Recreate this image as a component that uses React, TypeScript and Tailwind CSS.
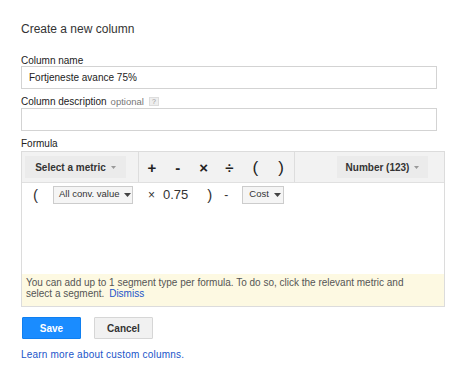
import React from "react";

const Caret = ({ className = "" }: { className?: string }) => (
    <svg width="7" height="4" viewBox="0 0 7 4" className={className}>
        <path d="M0 0h7L3.5 4z" fill="currentColor" />
    </svg>
);

const ops = [
    { label: "+", cls: "text-[15px] font-bold" },
    { label: "-", cls: "text-[15px] font-bold" },
    { label: "×", cls: "text-[15px] font-bold" },
    { label: "÷", cls: "text-[15px] font-bold" },
    { label: "(", cls: "text-[17px]" },
    { label: ")", cls: "text-[17px]" },
];

const App: React.FC = () => {
    return (
        <div className="w-[465px] h-[390px] bg-white pl-[21px] pt-[22px] font-['Arial','Liberation_Sans',sans-serif] text-[#222]">
            <div className="text-[12px] leading-[14px] h-[14px] text-[#333]">Create a new column</div>

            {/* column name */}
            <div className="mt-[19px] text-[10px] leading-[11px] h-[11px]">Column name</div>
            <div className="w-[416px] h-[23px] border border-[#d3d3d3] flex items-center pl-[7px] text-[10px]">
                Fortjeneste avance 75%
            </div>

            {/* column description */}
            <div className="mt-[7px] mb-[1px] text-[10px] leading-[11px] h-[11px] flex items-center">
                <span>Column description</span>
                <span className="ml-[4px] text-[9.5px] text-[#777]">optional</span>
                <span className="ml-[5px] w-[10px] h-[9px] bg-[#eeeeee] border border-[#dddddd] flex items-center justify-center text-[7px] leading-none text-[#999]">
                    ?
                </span>
            </div>
            <div className="w-[416px] h-[23px] border border-[#d3d3d3]" />

            {/* formula */}
            <div className="mt-[7px] mb-[2px] text-[10px] leading-[11px] h-[11px]">Formula</div>
            <div className="w-[424px] h-[156px] border border-[#dcdcdc] flex flex-col">
                <div className="h-[31px] bg-[#f2f2f2] border-b border-[#e0e0e0] flex items-stretch">
                    <div className="w-[117px] flex items-center pl-[3px] border-r border-[#dddddd]">
                        <div className="w-[101px] h-[22px] bg-[#ebebeb] flex items-center justify-center gap-[5px] text-[10px] font-bold text-[#333]">
                            Select a metric
                            <Caret className="text-[#999] w-[5px] h-[3px]" />
                        </div>
                    </div>
                    <div className="w-[156px] flex items-center border-r border-[#dddddd]">
                        {ops.map((op) => (
                            <div key={op.label} className={`w-[26px] text-center leading-none text-[#222] ${op.cls}`}>
                                {op.label}
                            </div>
                        ))}
                    </div>
                    <div className="flex-1 flex items-center justify-end pr-[16px]">
                        <div className="w-[91px] h-[22px] bg-[#ebebeb] flex items-center justify-center gap-[5px] text-[10px] font-bold text-[#333]">
                            Number (123)
                            <Caret className="text-[#999] w-[5px] h-[3px]" />
                        </div>
                    </div>
                </div>

                <div className="flex-1 flex flex-col">
                    <div className="h-[21px] mt-[1px] flex items-center text-[#333]">
                        <span className="ml-[11px] text-[15px] leading-none">(</span>
                        <div className="ml-[15px] w-[80px] h-[18px] bg-[#f5f5f5] border border-[#cccccc] flex items-center pl-[5px] gap-[4px] text-[9.5px] whitespace-nowrap">
                            All conv. value
                            <Caret className="text-[#444] w-[7px] h-[4px] shrink-0" />
                        </div>
                        <span className="ml-[15px] text-[12px] leading-none">×</span>
                        <span className="ml-[8px] text-[13px] leading-none">0.75</span>
                        <span className="ml-[19px] text-[15px] leading-none">)</span>
                        <span className="ml-[12px] text-[12px] leading-none">-</span>
                        <div className="ml-[14px] w-[42px] h-[18px] bg-[#f5f5f5] border border-[#cccccc] flex items-center pl-[6px] gap-[5px] text-[9.5px] whitespace-nowrap">
                            Cost
                            <Caret className="text-[#444] w-[7px] h-[4px] shrink-0" />
                        </div>
                    </div>
                    <div className="flex-1" />
                    <div className="h-[32px] bg-[#fdf9e2] pl-[4px] pt-[3px] text-[10px] leading-[11px] text-[#555]">
                        You can add up to 1 segment type per formula. To do so, click the relevant metric and
                        <br />
                        select a segment. <span className="ml-[2px] text-[#1a55c9]">Dismiss</span>
                    </div>
                </div>
            </div>

            {/* actions */}
            <div className="mt-[10px] flex items-center pl-[1px] gap-[13px]">
                <button className="w-[59px] h-[22px] bg-[#1a8cff] border border-[#0f7ff0] rounded-[1px] text-white text-[10px] font-bold">
                    Save
                </button>
                <button className="w-[59px] h-[22px] bg-[#f1f1f1] border border-[#d6d6d6] rounded-[1px] text-[#333] text-[10px] font-bold">
                    Cancel
                </button>
            </div>
            <div className="mt-[10px] text-[10px] leading-[12px] text-[#1a55c9] tracking-[0.2px]">
                Learn more about custom columns.
            </div>
        </div>
    );
};

export default App;
